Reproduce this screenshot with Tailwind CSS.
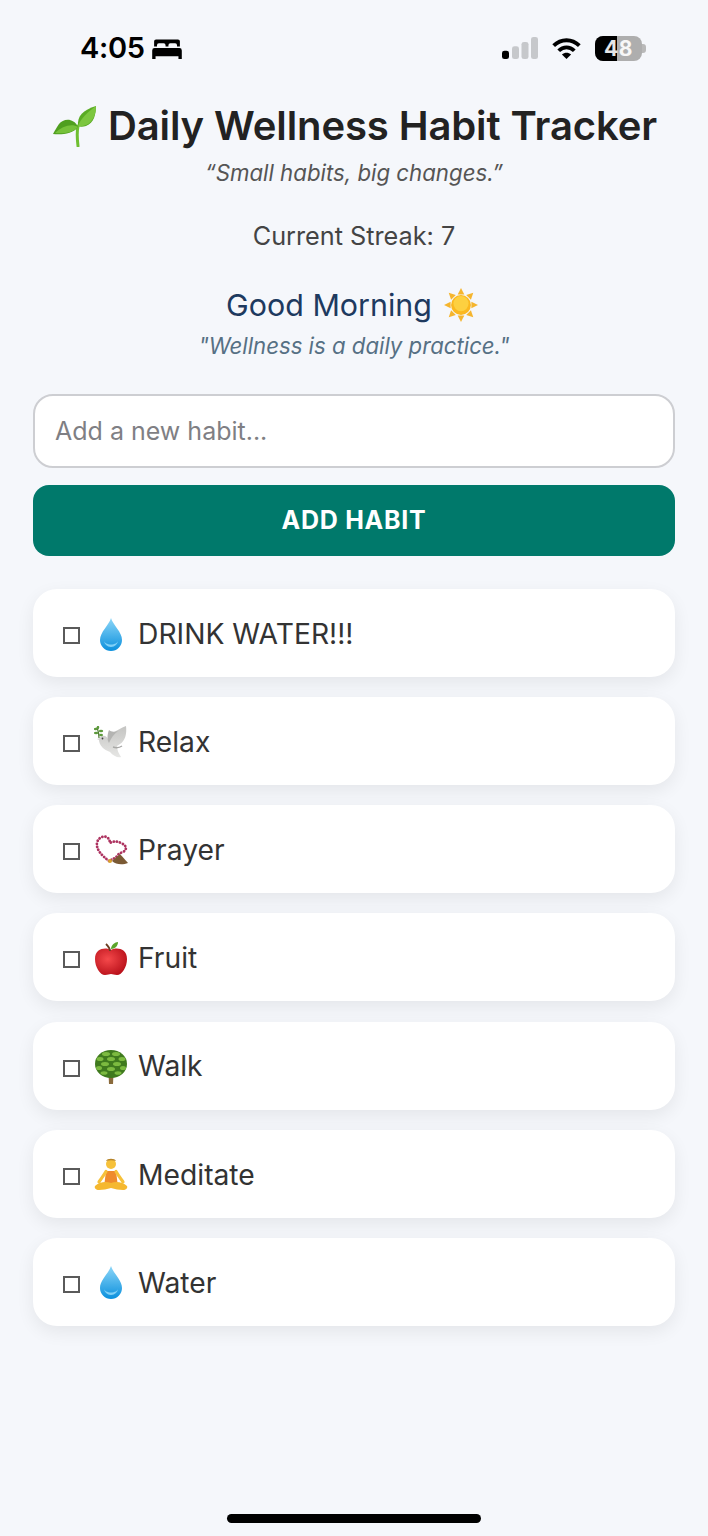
<!DOCTYPE html>
<html lang="en">
<head>
  <meta charset="UTF-8">
  <meta name="viewport" content="width=device-width, initial-scale=1.0">
  <title>Daily Wellness Habit Tracker</title>
  <script src="https://cdn.jsdelivr.net/npm/@tailwindcss/browser@4"></script>
</head>
<body class="bg-[#f5f7fb] font-['Inter',sans-serif] antialiased">
<div class="relative w-[708px] h-[1536px] overflow-hidden">

  <!-- status bar -->
  <div class="flex items-center justify-between h-[24px] mt-[36px] pl-[80px] pr-[62px]">
    <div class="flex items-center gap-[7px]">
      <span class="text-[29px] leading-[24px] font-semibold text-black tracking-[-0.3px]">4:05</span>
      <svg width="30" height="21" viewBox="0 0 31 22" fill="#000">
        <path d="M4 1.500h23a2 2 0 0 1 2 2V9h-3V7.500a2 2 0 0 0-2-2h-5a2 2 0 0 0-2 2V9h-3V7.500a2 2 0 0 0-2-2H7a2 2 0 0 0-2 2V9H2V3.500a2 2 0 0 1 2-2z"/>
        <path d="M2.500 10.500h26a2.500 2.500 0 0 1 2.500 2.500v9h-3.500v-3H3.500v3H0v-9a2.500 2.500 0 0 1 2.500-2.500z"/>
      </svg>
    </div>
    <div class="flex items-center gap-[13px]">
      <svg width="36" height="22" viewBox="0 0 36 24" preserveAspectRatio="none">
        <rect x="0" y="15" width="7" height="9" rx="2.500" fill="#000"/>
        <rect x="10" y="10" width="7" height="14" rx="2.500" fill="#c6c8cb"/>
        <rect x="19.500" y="5.500" width="7" height="18.500" rx="2.500" fill="#c6c8cb"/>
        <rect x="29" y="0" width="7" height="24" rx="2.500" fill="#c6c8cb"/>
      </svg>
      <svg width="31" height="22" viewBox="0 0 32 24" fill="none" stroke="#000" stroke-width="4.200">
        <path d="M2 9.500C10 1.500 22 1.500 30 9.500"/>
        <path d="M7.500 15c5-5 12-5 17 0"/>
        <path d="M16 24l-5-5c3-2.500 7-2.500 10 0z" fill="#000" stroke="none"/>
      </svg>
      <div class="flex items-center">
        <div class="relative w-[47px] h-[25px] rounded-[8px] bg-[#aeaeae] flex items-center justify-center">
          <div class="absolute left-0 top-0 bottom-0 w-[22px] bg-black rounded-l-[8px]"></div>
          <span class="relative text-[21px] leading-none font-bold text-white/90 tracking-[0.5px]">48</span>
        </div>
        <div class="w-[4px] h-[9px] rounded-r-[3px] bg-[#b9b9b9]"></div>
      </div>
    </div>
  </div>

  <!-- header -->
  <div class="flex items-center justify-center gap-[12px] mt-[36px] pl-[2px] h-[60px]">
    <svg width="43" height="41" viewBox="0 0 43 41">
      <path d="M25 40c-1-8-1-15 0-20" fill="none" stroke="#6fbf30" stroke-width="3" stroke-linecap="round"/>
      <path d="M25 21C20 11 10 13 6 18 4 21 2 24 0 28c8 1 20 0 25-7z" fill="#4f9f1f"/>
      <path d="M25 21C19 17 9 20 2 27c8 1 18 0 23-6z" fill="#76c13a"/>
      <path d="M25 20C24 10 30 4 43 0c0 8-2 17-10 20-3 1-6 1-8 0z" fill="#5aab24"/>
      <path d="M25 20C28 12 35 6 43 0c0 8-3 16-10 19-3 1-6 2-8 1z" fill="#7cc63f"/>
    </svg>
    <h1 class="text-[40px] leading-[60px] font-semibold text-[#222222] tracking-[-0.1px]">Daily Wellness Habit Tracker</h1>
  </div>
  <p class="text-center text-[22.25px] leading-[28px] italic text-[#555555] mt-[3px]">“Small habits, big changes.”</p>
  <p class="text-center text-[25.25px] leading-[32px] text-[#444444] mt-[33px]">Current Streak: 7</p>

  <div class="flex items-center justify-center gap-[12px] mt-[31px] pr-[4px] h-[44px]">
    <span class="text-[30.4px] leading-[44px] text-[#1e3a5f]">Good Morning</span>
    <svg width="34" height="34" viewBox="0 0 36 36">
      <g fill="#f5b52e">
        <path d="M18 0l3.500 7h-7z"/><path d="M18 36l-3.500-7h7z"/><path d="M0 18l7-3.500v7z"/><path d="M36 18l-7 3.500v-7z"/>
        <path d="M5 5l7.500 2.500-5 5z"/><path d="M31 5l-2.500 7.500-5-5z"/><path d="M5 31l2.500-7.500 5 5z"/><path d="M31 31l-7.500-2.500 5-5z"/>
      </g>
      <circle cx="18" cy="18" r="10.500" fill="#fbb81f"/>
      <circle cx="18" cy="16.500" r="8" fill="#fdd040"/>
    </svg>
  </div>
  <p class="text-center text-[22.2px] leading-[28px] italic text-[#567084] mt-[5px]">"Wellness is a daily practice."</p>

  <!-- form -->
  <div class="mx-[33px] mt-[34px] flex flex-col gap-[17px]">
    <input type="text" placeholder="Add a new habit..." class="w-full h-[74px] px-[20px] bg-white border-2 border-[#cdced2] rounded-[20px] text-[25px] outline-none placeholder:text-[#7f7f84]">
    <button class="w-full h-[71px] pt-[1px] rounded-[16px] bg-[#00796b] text-white text-[25px] font-bold tracking-[0.75px]">ADD HABIT</button>
  </div>

  <!-- habits -->
  <ul class="mx-[33px] mt-[33px] flex flex-col gap-[20.17px]">
    <li class="h-[88px] pt-[2px] bg-white rounded-[24px] shadow-[0_6px_18px_rgba(0,0,0,0.07)] flex items-center pl-[30px] text-[28.25px] text-[#333333]">
      <span class="w-[17px] h-[17px] border-2 border-[#5a5a5a] mt-[3px]"></span>
      <span class="w-[34px] h-[36px] ml-[14px] mr-[10px] flex items-center justify-center">
        <svg width="22" height="33" viewBox="0 0 22 33"><defs><linearGradient id="drop" x1="0" y1="0" x2="0" y2="1"><stop offset="0" stop-color="#8cd6f8"/><stop offset="1" stop-color="#0b90dd"/></linearGradient></defs><path d="M11 0c2 7 11 14 11 22a11 11 0 0 1-22 0C0 14 9 7 11 0z" fill="url(#drop)"/><path d="M4 22a7 7 0 0 0 14 0c0 6-14 6-14 0z" fill="#7fd0f7"/></svg>
      </span>
      DRINK WATER!!!
    </li>
    <li class="h-[88px] pt-[2px] bg-white rounded-[24px] shadow-[0_6px_18px_rgba(0,0,0,0.07)] flex items-center pl-[30px] text-[28.25px] text-[#333333]">
      <span class="w-[17px] h-[17px] border-2 border-[#5a5a5a] mt-[3px]"></span>
      <span class="w-[34px] h-[36px] ml-[14px] mr-[10px] flex items-center justify-center">
        <svg width="34" height="33" viewBox="0 0 34 33">
          <defs><linearGradient id="dove" x1="0" y1="0" x2="0" y2="1"><stop offset="0" stop-color="#c4c4c2"/><stop offset="1" stop-color="#e6e6e4"/></linearGradient></defs>
          <path d="M8 10c3-1 5 1 6 3 2-4 8-9 18-13 1 8-1 15-6 18l-3 2c0 4 2 8 4 11-3 1-8-1-11-5-6-2-11-7-11-12l-2-1 3-1c0-1 1-2 2-2z" fill="url(#dove)"/>
          <path d="M24 5c-4 3-7 7-9 12-2-3-2-8 0-13 2 2 5 2 9 1z" fill="#b4b4b2"/>
          <path d="M28 20c-3 2-6 2-9 1" stroke="#a8a8a6" stroke-width="1.500" fill="none"/>
          <circle cx="8.500" cy="12.500" r="0.900" fill="#444"/>
          <path d="M5 12C5 8 4 4 3 1" stroke="#4f7a35" stroke-width="1.200" fill="none"/>
          <g fill="#5d9a3c"><ellipse cx="2" cy="7" rx="2.200" ry="1.200"/><ellipse cx="7" cy="5" rx="2.200" ry="1.200"/><ellipse cx="1.500" cy="3" rx="1.800" ry="1.200"/><ellipse cx="7" cy="9" rx="2" ry="1.200"/><ellipse cx="4" cy="1.500" rx="1.200" ry="1.800"/></g>
        </svg>
      </span>
      Relax
    </li>
    <li class="h-[88px] pt-[2px] bg-white rounded-[24px] shadow-[0_6px_18px_rgba(0,0,0,0.07)] flex items-center pl-[30px] text-[28.25px] text-[#333333]">
      <span class="w-[17px] h-[17px] border-2 border-[#5a5a5a] mt-[3px]"></span>
      <span class="w-[34px] h-[36px] ml-[14px] mr-[10px] flex items-center justify-center">
        <svg width="33" height="30" viewBox="0 0 33 30">
          <path d="M14 26C6 20 1 14 2 8 3 2 10 0 13 3c2 2 2 5 2 5 3-2 7-2 11 0 5 2 7 6 2 9-2 1-4 1-5 3-1 2-5 4-9 6z" fill="none" stroke="#ad3360" stroke-width="2.800" stroke-dasharray="0.1 3" stroke-linecap="round"/>
          <path d="M17 26l8-7 8 9c-5 2-12 2-16-2z" fill="#7b5a34"/>
          <circle cx="15" cy="26" r="2" fill="#d8a42c"/>
        </svg>
      </span>
      Prayer
    </li>
    <li class="h-[88px] pt-[2px] bg-white rounded-[24px] shadow-[0_6px_18px_rgba(0,0,0,0.07)] flex items-center pl-[30px] text-[28.25px] text-[#333333]">
      <span class="w-[17px] h-[17px] border-2 border-[#5a5a5a] mt-[3px]"></span>
      <span class="w-[34px] h-[36px] ml-[14px] mr-[10px] flex items-center justify-center">
        <svg width="32" height="33" viewBox="0 0 32 33">
          <defs><radialGradient id="apple" cx="0.4" cy="0.4" r="0.7"><stop offset="0" stop-color="#f5494b"/><stop offset="1" stop-color="#b50d17"/></radialGradient></defs>
          <path d="M16 8c-5-3-16-2-16 9 0 8 5 16 10 16 3 0 4-1 6-1s3 1 6 1c5 0 10-8 10-16 0-11-11-12-16-9z" fill="url(#apple)"/>
          <path d="M15 9c0-3-2-5-4-7" stroke="#6b3d20" stroke-width="1.800" fill="none"/>
          <path d="M16 7c0-4 4-7 7-7 0 4-3 7-7 7z" fill="#5ba52b"/>
        </svg>
      </span>
      Fruit
    </li>
    <li class="h-[88px] pt-[2px] bg-white rounded-[24px] shadow-[0_6px_18px_rgba(0,0,0,0.07)] flex items-center pl-[30px] text-[28.25px] text-[#333333]">
      <span class="w-[17px] h-[17px] border-2 border-[#5a5a5a] mt-[3px]"></span>
      <span class="w-[34px] h-[36px] ml-[14px] mr-[10px] flex items-center justify-center">
        <svg width="32" height="34" viewBox="0 0 32 34">
          <path d="M13.500 24h5l-.5 10h-4z" fill="#8a6a3c"/>
          <ellipse cx="16" cy="14" rx="16" ry="14" fill="#3f7a1e"/>
          <g fill="#7cba40">
            <ellipse cx="11" cy="4" rx="4" ry="2"/><ellipse cx="21" cy="4" rx="4" ry="2"/>
            <ellipse cx="5" cy="9" rx="3.500" ry="2"/><ellipse cx="16" cy="9" rx="4" ry="2"/><ellipse cx="27" cy="9" rx="3.500" ry="2"/>
            <ellipse cx="10" cy="14" rx="4" ry="2"/><ellipse cx="22" cy="14" rx="4" ry="2"/>
            <ellipse cx="4" cy="18" rx="3" ry="2"/><ellipse cx="16" cy="19" rx="4" ry="2"/><ellipse cx="28" cy="18" rx="3" ry="2"/>
            <ellipse cx="9" cy="23" rx="3.500" ry="1.800"/><ellipse cx="23" cy="23" rx="3.500" ry="1.800"/>
          </g>
        </svg>
      </span>
      Walk
    </li>
    <li class="h-[88px] pt-[2px] bg-white rounded-[24px] shadow-[0_6px_18px_rgba(0,0,0,0.07)] flex items-center pl-[30px] text-[28.25px] text-[#333333]">
      <span class="w-[17px] h-[17px] border-2 border-[#5a5a5a] mt-[3px]"></span>
      <span class="w-[34px] h-[36px] ml-[14px] mr-[10px] flex items-center justify-center">
        <svg width="34" height="33" viewBox="0 0 34 33">
          <circle cx="17" cy="6" r="5" fill="#f6c13a"/>
          <path d="M12 3c1-3 9-3 10 0-3-1-7-1-10 0z" fill="#b5832a"/>
          <path d="M12 13h10l1.500 12h-13z" fill="#ef8b2c"/>
          <path d="M12 13.500C10 17 7 21 5 24" stroke="#f6c13a" stroke-width="3.200" stroke-linecap="round" fill="none"/>
          <path d="M22 13.500c2 3.500 5 7.500 7 10.500" stroke="#f6c13a" stroke-width="3.200" stroke-linecap="round" fill="none"/>
          <path d="M1 28c4-4 11-5 16-3 5-2 12-1 16 3 1 2-1 4-4 4-4 0-8-1-12-2-4 1-8 2-12 2-3 0-5-2-4-4z" fill="#f5b82f"/>
        </svg>
      </span>
      Meditate
    </li>
    <li class="h-[88px] pt-[2px] bg-white rounded-[24px] shadow-[0_6px_18px_rgba(0,0,0,0.07)] flex items-center pl-[30px] text-[28.25px] text-[#333333]">
      <span class="w-[17px] h-[17px] border-2 border-[#5a5a5a] mt-[3px]"></span>
      <span class="w-[34px] h-[36px] ml-[14px] mr-[10px] flex items-center justify-center">
        <svg width="22" height="33" viewBox="0 0 22 33"><path d="M11 0c2 7 11 14 11 22a11 11 0 0 1-22 0C0 14 9 7 11 0z" fill="url(#drop)"/><path d="M4 22a7 7 0 0 0 14 0c0 6-14 6-14 0z" fill="#7fd0f7"/></svg>
      </span>
      Water
    </li>
  </ul>

  <!-- home indicator -->
  <div class="absolute left-[227px] bottom-[13px] w-[254px] h-[9px] rounded-full bg-black"></div>
</div>
</body>
</html>
